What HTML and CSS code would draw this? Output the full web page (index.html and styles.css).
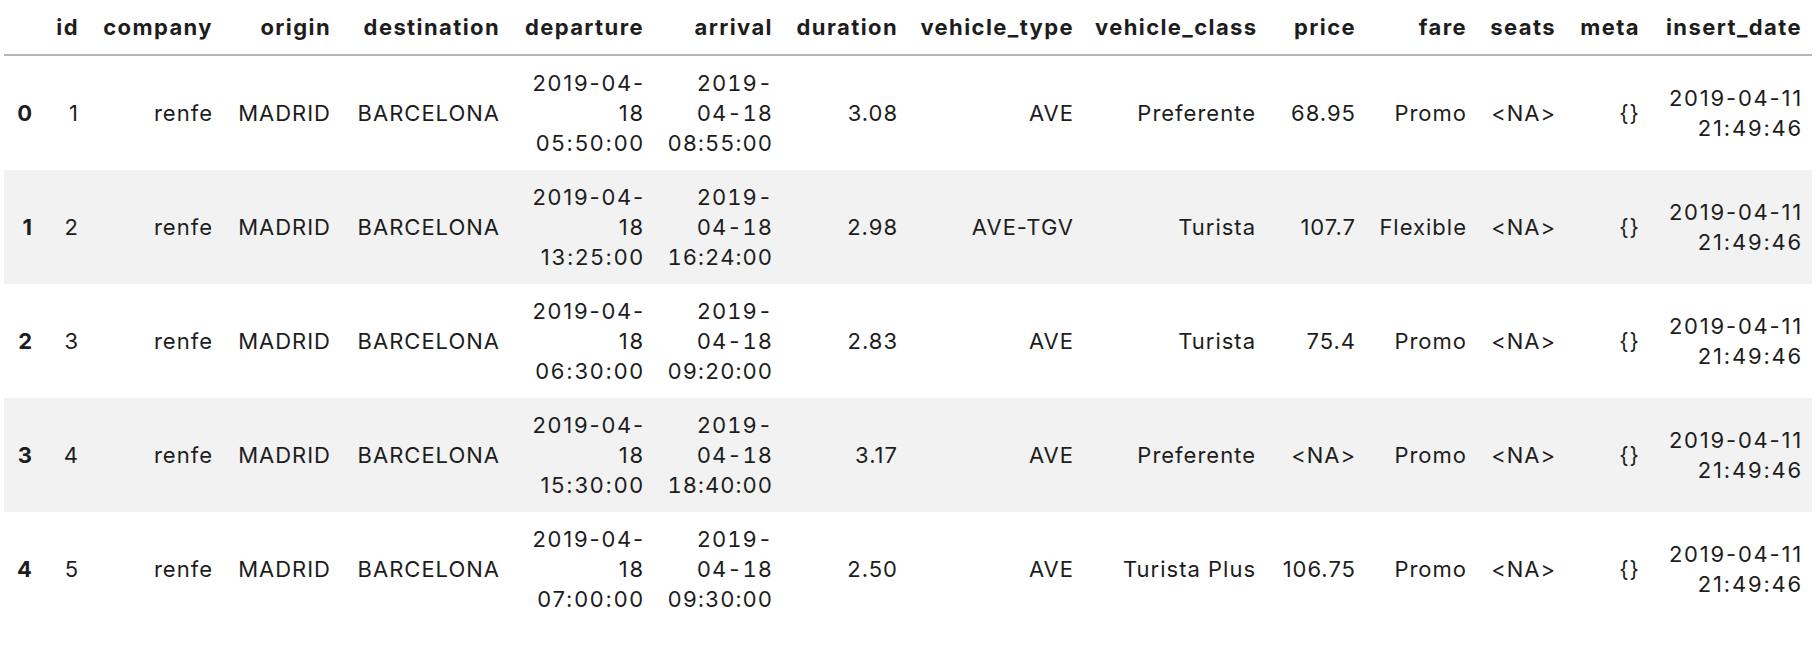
FILE: index.html
```html
<!DOCTYPE html>
<html>
<head>
<meta charset="utf-8">
<link rel="stylesheet" href="styles.css">
</head>
<body>
<div class="wrap">
<table class="dataframe">
  <colgroup>
    <col class="c-idx"><col class="c-id"><col class="c-company"><col class="c-origin"><col class="c-dest"><col class="c-dep"><col class="c-arr"><col class="c-dur"><col class="c-vtype"><col class="c-vclass"><col class="c-price"><col class="c-fare"><col class="c-seats"><col class="c-meta"><col class="c-insert">
  </colgroup>
  <thead>
    <tr>
      <th></th><th>id</th><th>company</th><th>origin</th><th>destination</th><th>departure</th><th>arrival</th><th>duration</th><th>vehicle_type</th><th>vehicle_class</th><th>price</th><th>fare</th><th>seats</th><th>meta</th><th>insert_date</th>
    </tr>
  </thead>
  <tbody>
    <tr>
      <th>0</th><td>1</td><td>renfe</td><td>MADRID</td><td>BARCELONA</td><td class="dt">2019-04-18 05:50:00</td><td class="arr">2019-04-18 08:55:00</td><td>3.08</td><td>AVE</td><td>Preferente</td><td>68.95</td><td>Promo</td><td>&lt;NA&gt;</td><td>{}</td><td class="dt">2019-04-11 21:49:46</td>
    </tr>
    <tr>
      <th>1</th><td>2</td><td>renfe</td><td>MADRID</td><td>BARCELONA</td><td class="dt">2019-04-18 13:25:00</td><td class="arr">2019-04-18 16:24:00</td><td>2.98</td><td>AVE-TGV</td><td>Turista</td><td>107.7</td><td>Flexible</td><td>&lt;NA&gt;</td><td>{}</td><td class="dt">2019-04-11 21:49:46</td>
    </tr>
    <tr>
      <th>2</th><td>3</td><td>renfe</td><td>MADRID</td><td>BARCELONA</td><td class="dt">2019-04-18 06:30:00</td><td class="arr">2019-04-18 09:20:00</td><td>2.83</td><td>AVE</td><td>Turista</td><td>75.4</td><td>Promo</td><td>&lt;NA&gt;</td><td>{}</td><td class="dt">2019-04-11 21:49:46</td>
    </tr>
    <tr>
      <th>3</th><td>4</td><td>renfe</td><td>MADRID</td><td>BARCELONA</td><td class="dt">2019-04-18 15:30:00</td><td class="arr">2019-04-18 18:40:00</td><td>3.17</td><td>AVE</td><td>Preferente</td><td>&lt;NA&gt;</td><td>Promo</td><td>&lt;NA&gt;</td><td>{}</td><td class="dt">2019-04-11 21:49:46</td>
    </tr>
    <tr>
      <th>4</th><td>5</td><td>renfe</td><td>MADRID</td><td>BARCELONA</td><td class="dt">2019-04-18 07:00:00</td><td class="arr">2019-04-18 09:30:00</td><td>2.50</td><td>AVE</td><td>Turista Plus</td><td>106.75</td><td>Promo</td><td>&lt;NA&gt;</td><td>{}</td><td class="dt">2019-04-11 21:49:46</td>
    </tr>
  </tbody>
</table>
</div>
</body>
</html>
```
FILE: styles.css
```css
html, body {
  margin: 0;
  padding: 0;
  background: #ffffff;
}

.wrap {
  padding: 0 4px;
}

.dataframe {
  border-collapse: collapse;
  border-spacing: 0;
  table-layout: fixed;
  width: 1808px;
  font-family: Inter, "Noto Sans", "Liberation Sans", sans-serif;
  font-size: 22px;
  line-height: 30px;
  color: #1d1d1d;
}

.dataframe thead {
  border-bottom: 2px solid #b5b5b5;
}

.dataframe th,
.dataframe td {
  text-align: right;
  vertical-align: middle;
  padding: 12px 10px 12px 11px;
  white-space: normal;
}

.dataframe th {
  font-weight: 700;
}

.dataframe thead th {
  letter-spacing: 1.4px;
  padding-right: 10px;
}

.dataframe tbody th {
  padding-right: 11px;
}

.dataframe td {
  font-weight: 400;
  letter-spacing: 1px;
}

.dataframe td.dt {
  letter-spacing: 1.8px;
  padding-right: 9px;
}

.dataframe td.arr {
  letter-spacing: 1px;
  font-feature-settings: "tnum" 1;
  padding-left: 11px;
  padding-right: 10px;
}

.dataframe tbody tr:nth-child(odd) {
  background: #ffffff;
}

.dataframe tbody tr:nth-child(even) {
  background: #f2f2f2;
}

.c-idx { width: 39px; }
.c-id { width: 46px; }
.c-company { width: 134px; }
.c-origin { width: 118px; }
.c-dest { width: 169px; }
.c-dep { width: 144px; }
.c-arr { width: 129px; }
.c-dur { width: 125px; }
.c-vtype { width: 176px; }
.c-vclass { width: 182px; }
.c-price { width: 100px; }
.c-fare { width: 111px; }
.c-seats { width: 89px; }
.c-meta { width: 84px; }
.c-insert { width: 162px; }
```
